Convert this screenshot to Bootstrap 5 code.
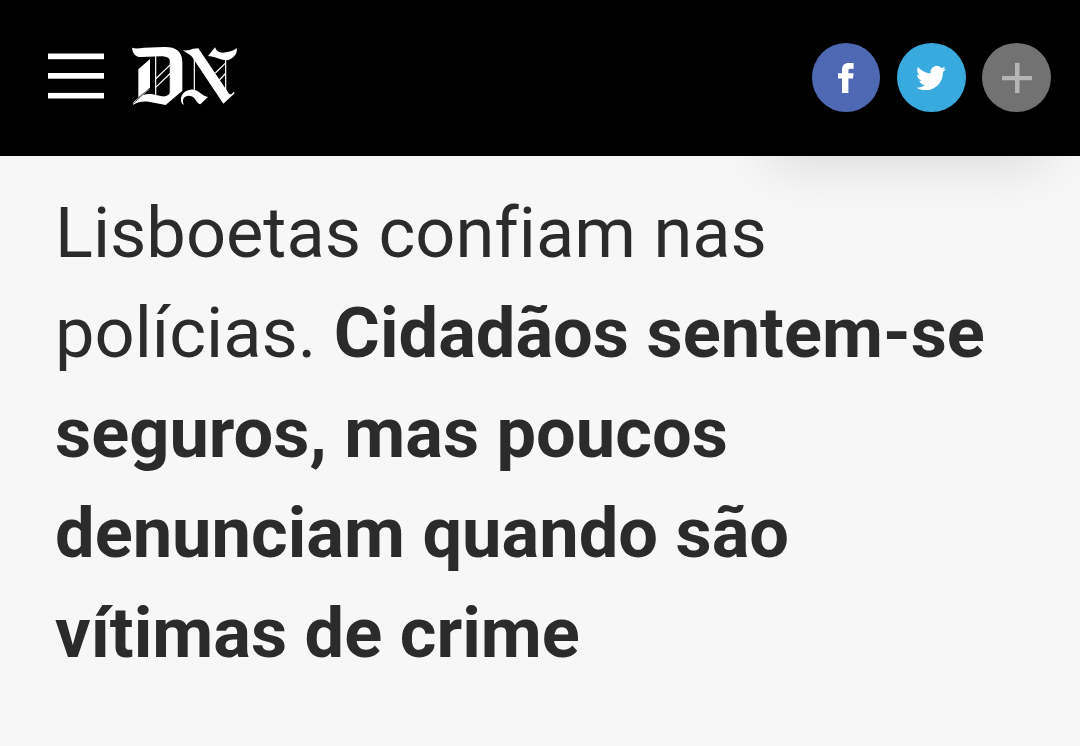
<!DOCTYPE html>
<html lang="pt">
<head>
  <meta charset="UTF-8">
  <meta name="viewport" content="width=device-width, initial-scale=1">
  <title>Diário de Notícias</title>
  <link href="https://cdn.jsdelivr.net/npm/bootstrap@5.3.7/dist/css/bootstrap.min.css" rel="stylesheet">
  <style>
    body { background: #f7f7f7; color: #2b2b2b; font-family: Roboto, "Liberation Sans", sans-serif; overflow: hidden; }
    .topbar { height: 156px; background: #000; padding: 0 29px 1px 48px; }
    .topbar-left { padding-bottom: 4px; }
    .menu-btn { width: 56px; height: 46px; margin-right: 26px; }
    .menu-btn svg, .brand-logo svg, .share-btn svg { display: block; }
    .share-list { gap: 16.5px; }
    .share-btn { width: 68.7px; height: 68.7px; }
    .share-fb { width: 68px; margin-right: .5px; background: #4e68b4; }
    .share-tw { background: #39aadd; }
    .share-more { background: #727272; }
    .share-shadow { position: absolute; top: 156px; left: 0; width: 100%; height: 60px; overflow: hidden; }
    .share-shadow::before { content: ""; position: absolute; left: 780px; top: -64px; width: 256px; height: 60px; box-shadow: 0 0 54px 12px rgba(0, 0, 0, .12); }
    .headline { margin: 0; padding: 27px 55px 0; font-size: 70.4px; line-height: 100px; font-weight: 400; font-variant-ligatures: none; }
  </style>
</head>
<body>
  <header class="topbar navbar d-flex flex-nowrap align-items-center justify-content-between">
    <div class="topbar-left d-flex align-items-center">
      <button class="menu-btn btn p-0 border-0 rounded-0" type="button" aria-label="Menu">
        <svg width="56" height="46" viewBox="0 0 56 46" fill="#fff">
          <rect y="0.5" width="56" height="5.7"/>
          <rect y="20" width="56" height="5.7"/>
          <rect y="39.9" width="56" height="5.6"/>
        </svg>
      </button>
      <a class="brand-logo" href="#" aria-label="Diário de Notícias">
        <svg width="110" height="62" viewBox="30 24 330 186" fill="#fff">
          <path d="M36 32C46 36 58 34 72 32L132 30C166 29 187 42 187 76V161L137 204L86 194C68 192 55 193 40 203L38 199L51 187C62 174 76 170 94 171L126 178C140 180 152 172 152 160V81C152 66 145 59 126 58L62 60C48 60 38 51 36 32Z"/>
          <path d="M55 97L90 66V152L55 181Z"/>
          <path d="M107 58V176M151 70V172M107 126L152 82M107 151L152 108M88 155L42 197" fill="none" stroke="#fff" stroke-width="3.6"/>
          <path d="M39 200L90 153" fill="none" stroke="#000" stroke-width="2"/>
          <path d="M188 39C198 42 208 39 219 35L235 34L325 167C331 176 337 171 341 164L344 169L310 200L217 61C209 50 199 49 188 39Z"/>
          <path d="M264 57L285 31C289 44 301 50 318 46C335 43 345 38 350 33C353 48 343 62 326 69C302 72 285 57 264 57Z"/>
          <path d="M187 201C176 184 187 161 211 158C235 155 242 176 264 180L241 202C227 198 228 177 207 176C192 176 184 188 192 203Z"/>
          <path d="M223 66V161M317 67V170M286 108L318 77M298 129L318 108" fill="none" stroke="#fff" stroke-width="3.6"/>
        </svg>
      </a>
    </div>
    <div class="share-list d-flex">
      <a class="share-btn share-fb rounded-circle d-flex align-items-center justify-content-center" href="#" aria-label="Facebook">
        <svg width="16" height="30" viewBox="0 0 16 30" fill="#fff">
          <path d="M4 30V15.4H0V10.2H4V7.2C4 2.4 6.4 0 10.8 0H15.6V5.7H12.7C10.9 5.7 10.4 6.5 10.4 8V10.2H15.6L15 15.4H10.4V30Z"/>
        </svg>
      </a>
      <a class="share-btn share-tw rounded-circle d-flex align-items-center justify-content-center" href="#" aria-label="Twitter">
        <svg width="30" height="25" viewBox="0 1.5 24 20" fill="#fff">
          <path d="M23.95 4.57a10 10 0 0 1-2.82.77 4.96 4.96 0 0 0 2.16-2.72c-.95.55-2 .96-3.13 1.18a4.92 4.92 0 0 0-8.38 4.48C7.69 8.1 4.07 6.13 1.64 3.16a4.82 4.82 0 0 0-.67 2.48c0 1.71.87 3.21 2.19 4.1a4.9 4.9 0 0 1-2.23-.62v.06a4.92 4.92 0 0 0 3.95 4.83 5 5 0 0 1-2.21.08 4.94 4.94 0 0 0 4.6 3.42A9.87 9.87 0 0 1 0 19.54a13.99 13.99 0 0 0 7.56 2.21c9.05 0 14-7.5 14-13.98 0-.21 0-.42-.02-.63a9.94 9.94 0 0 0 2.41-2.57z"/>
        </svg>
      </a>
      <a class="share-btn share-more rounded-circle d-flex align-items-center justify-content-center" href="#" aria-label="Mais">
        <svg width="30" height="30" viewBox="0 0 30 30" fill="#b5b5b5">
          <path d="M13 0H17.5V13H30V17.3H17.5V30H13V17.3H0V13H13Z"/>
        </svg>
      </a>
    </div>
  </header>
  <div class="share-shadow"></div>
  <main>
    <h1 class="headline">Lisboetas confiam nas<br>polícias. <strong class="fw-bold">Cidadãos sentem-se<br>seguros, mas poucos<br>denunciam quando são<br>vítimas de crime</strong></h1>
  </main>
  <script src="https://cdn.jsdelivr.net/npm/bootstrap@5.3.7/dist/js/bootstrap.bundle.min.js"></script>
</body>
</html>
